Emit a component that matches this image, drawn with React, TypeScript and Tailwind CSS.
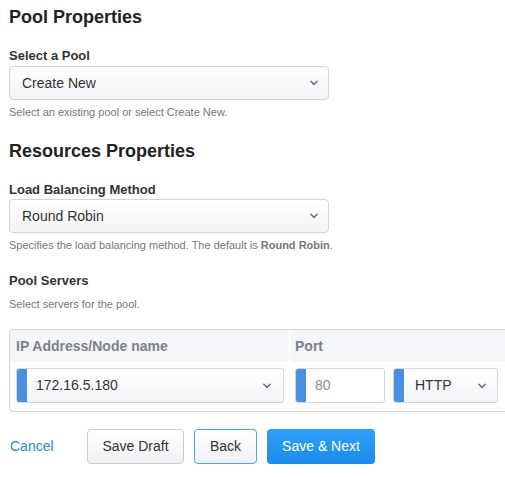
import React from "react"

function Chevron() {
  return (
    <svg width="10" height="6" viewBox="0 0 10 6" className="text-[#6b6f7a]">
      <path d="M1.8 1.3L5 4.4l3.2-3.1" fill="none" stroke="currentColor" strokeWidth={1.5} strokeLinecap="round" strokeLinejoin="round" />
    </svg>
  )
}

function SelectBox({ value }: { value: string }) {
  return (
    <div className="flex h-[34px] w-[320px] items-center justify-between rounded-[4px] border border-[#cfd3db] bg-gradient-to-b from-white to-[#f3f4f7] pl-[12px] pr-[9px] text-[14px] text-[#333]">
      <span>{value}</span>
      <Chevron />
    </div>
  )
}

function Marked({ children, width, select }: { children: React.ReactNode; width: string; select?: boolean }) {
  return (
    <div className={`flex h-[35px] ${width} overflow-hidden rounded-[3px] border border-[#d4d7de] ${select ? "bg-gradient-to-b from-white to-[#f3f4f7]" : "bg-white"}`}>
      <div className="w-[10px] shrink-0 bg-[#4a8fe0]" />
      {children}
    </div>
  )
}

export default function App() {
  return (
    <div className="w-full overflow-hidden bg-white pl-[9px] font-['Liberation_Sans',Arial,sans-serif] text-[#333]">
      <h2 className="pt-[6px] text-[18px] font-bold leading-[22px] text-[#222]">Pool Properties</h2>

      <div className="mt-[20px] text-[13px] font-bold leading-[16px]">Select a Pool</div>
      <div className="mt-[2px]">
        <SelectBox value="Create New" />
      </div>
      <p className="mt-[6px] text-[11px] leading-[13px] text-[#777]">Select an existing pool or select Create New.</p>

      <h2 className="mt-[21px] text-[18px] font-bold leading-[22px] text-[#222]">Resources Properties</h2>

      <div className="mt-[20px] text-[13px] font-bold leading-[16px]">Load Balancing Method</div>
      <div className="mt-[1px]">
        <SelectBox value="Round Robin" />
      </div>
      <p className="mt-[6px] text-[11px] leading-[13px] text-[#777]">
        Specifies the load balancing method. The default is <b className="font-bold">Round Robin</b>.
      </p>

      <div className="mt-[21px] text-[13px] font-bold leading-[16px]">Pool Servers</div>
      <p className="mt-[9px] text-[11px] leading-[13px] text-[#777]">Select servers for the pool.</p>

      <div className="mt-[18px] w-[520px] rounded-[4px] border border-[#d4d7de] pb-[8px]">
        <div className="flex gap-px">
          <div className="flex h-[32px] w-[279px] items-center rounded-[4px] bg-[#f4f6f9] pl-[6px] text-[14px] font-bold text-[#7d818c]">
            IP Address/Node name
          </div>
          <div className="flex h-[32px] flex-1 items-center rounded-[4px] bg-[#f4f6f9] pl-[5px] text-[14px] font-bold text-[#7d818c]">
            Port
          </div>
        </div>
        <div className="mt-[6px] flex items-center pl-[6px]">
          <Marked width="w-[268px]" select>
            <div className="flex flex-1 items-center justify-between pl-[9px] pr-[11px] text-[14px] text-[#333]">
              <span>172.16.5.180</span>
              <Chevron />
            </div>
          </Marked>
          <div className="ml-[11px]">
            <Marked width="w-[90px]">
              <div className="flex flex-1 items-center pl-[9px] text-[14px] text-[#8a8f99]">80</div>
            </Marked>
          </div>
          <div className="ml-[8px]">
            <Marked width="w-[105px]" select>
              <div className="flex flex-1 items-center justify-between pl-[11px] pr-[10px] text-[14px] text-[#333]">
                <span>HTTP</span>
                <Chevron />
              </div>
            </Marked>
          </div>
        </div>
      </div>

      <div className="mt-[17px] flex items-center">
        <a className="w-[78px] pl-px text-[14px] text-[#3a86c8]">Cancel</a>
        <button className="h-[35px] w-[97px] rounded-[4px] border border-[#c9cdd5] bg-gradient-to-b from-white to-[#eff0f4] text-[14px] text-[#333]">
          Save Draft
        </button>
        <button className="ml-[10px] h-[35px] w-[63px] rounded-[4px] border border-[#4aa3ef] bg-gradient-to-b from-white to-[#eff0f4] text-[14px] text-[#333]">
          Back
        </button>
        <button className="ml-[10px] h-[35px] w-[108px] rounded-[4px] bg-gradient-to-b from-[#2fa1f5] to-[#1a8be8] text-[14px] text-white">
          Save &amp; Next
        </button>
      </div>
      <div className="h-[13px]" />
    </div>
  )
}
